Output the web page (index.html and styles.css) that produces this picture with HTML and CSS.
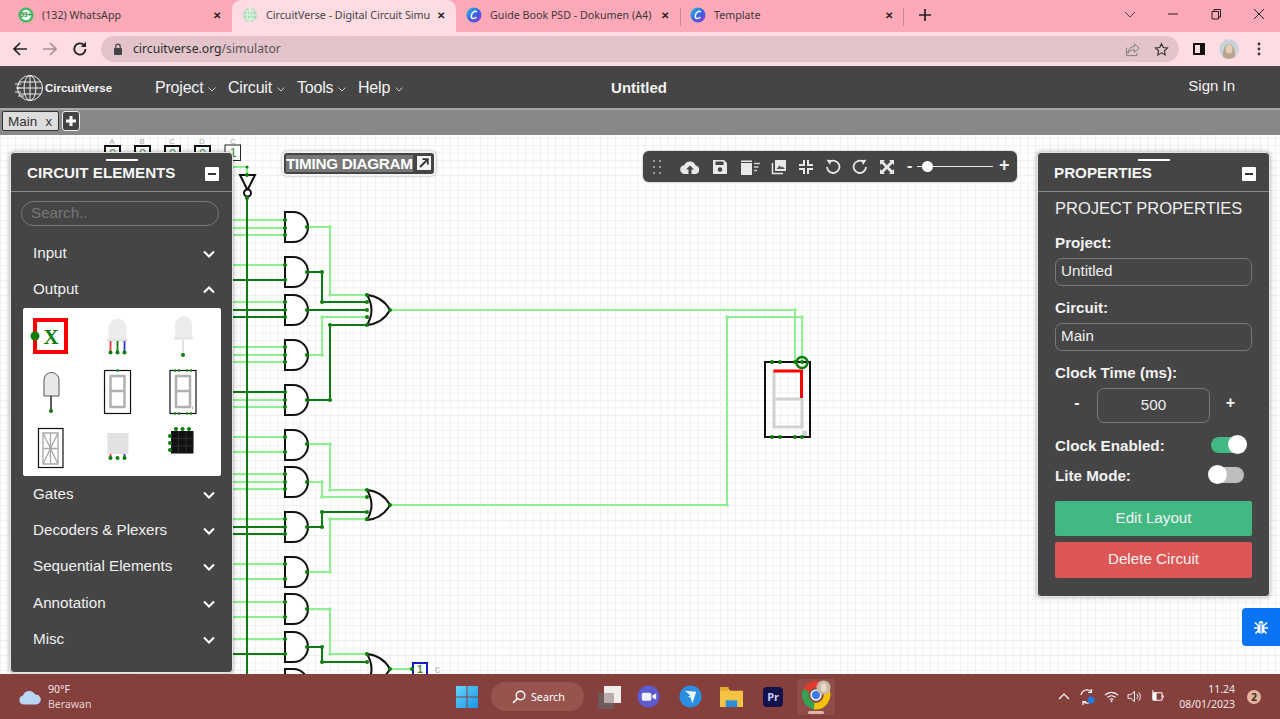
FILE: index.html
```html
<!DOCTYPE html>
<html lang="en">
<head>
<meta charset="utf-8">
<title>CircuitVerse - Digital Circuit Simulator</title>
<link rel="stylesheet" href="styles.css">
</head>
<body>
<div class="screen">

  <div class="tabstrip">
    <div class="tab">
      <svg class="favicon" viewBox="0 0 16 16"><circle cx="8" cy="8" r="7.5" fill="#3dbb5a"/><circle cx="8" cy="8" r="5.2" fill="#f4fff6"/><text x="8" y="10.4" class="fav-num">99+</text></svg>
      <span class="tab-title">(132) WhatsApp</span>
      <span class="tab-x">✕</span>
    </div>
    <div class="tab tab-active">
      <svg class="favicon" viewBox="0 0 16 16"><circle cx="8" cy="8" r="7" fill="#a8dcb4"/><path d="M1 8h14M8 1v14M3 4h10M3 12h10M8 1C4 4 4 12 8 15M8 1c4 3 4 11 0 14" fill="none" stroke="#e8f5ea" stroke-width="1"/></svg>
      <span class="tab-title tab-fade">CircuitVerse - Digital Circuit Simu</span>
      <span class="tab-x">✕</span>
    </div>
    <div class="tab">
      <svg class="favicon" viewBox="0 0 16 16"><defs><linearGradient id="canva" x1="0" y1="0" x2="1" y2="1"><stop offset="0" stop-color="#21c4d8"/><stop offset=".55" stop-color="#3d5ee0"/><stop offset="1" stop-color="#8a3be0"/></linearGradient></defs><circle cx="8" cy="8" r="7.5" fill="url(#canva)"/><path d="M10.6 5.2C9.6 3.4 6.2 4.6 5.4 8.4c-.7 3.4 2.4 4.2 5 1.6" fill="none" stroke="#fff" stroke-width="1.5"/></svg>
      <span class="tab-title">Guide Book PSD - Dokumen (A4)</span>
      <span class="tab-x">✕</span>
    </div>
    <div class="tab tab-sep">
      <svg class="favicon" viewBox="0 0 16 16"><circle cx="8" cy="8" r="7.5" fill="url(#canva)"/><path d="M10.6 5.2C9.6 3.4 6.2 4.6 5.4 8.4c-.7 3.4 2.4 4.2 5 1.6" fill="none" stroke="#fff" stroke-width="1.5"/></svg>
      <span class="tab-title">Template</span>
      <span class="tab-x">✕</span>
    </div>
    <svg class="newtab" viewBox="0 0 12 12"><path d="M6 0v12M0 6h12" stroke="#222" stroke-width="1.7"/></svg>
    <div class="winctl">
      <svg viewBox="0 0 12 12"><path d="M1 4l5 5 5-5" fill="none" stroke="#444" stroke-width="1"/></svg>
      <svg viewBox="0 0 12 12"><path d="M1 6h10" stroke="#222" stroke-width="1"/></svg>
      <svg viewBox="0 0 12 12"><path d="M2 3.5h6.5V11H2zM4 3.5V1.5h6.5V9H8.500" fill="none" stroke="#222" stroke-width="1"/></svg>
      <svg viewBox="0 0 12 12"><path d="M1 1l10 10M11 1L1 11" stroke="#222" stroke-width="1"/></svg>
    </div>
  </div>

  <div class="browserbar">
    <svg class="nav-ico" viewBox="0 0 16 16"><path d="M15 8H2M8 2L2 8l6 6" fill="none" stroke="#222" stroke-width="1.7"/></svg>
    <svg class="nav-ico" viewBox="0 0 16 16"><path d="M1 8h13M8 2l6 6-6 6" fill="none" stroke="#a68f95" stroke-width="1.7"/></svg>
    <svg class="nav-ico" viewBox="0 0 16 16"><path d="M13.500 8A5.600 5.600 0 1 1 11.800 4" fill="none" stroke="#222" stroke-width="1.800"/><path d="M14 0.800V6H8.800z" fill="#222"/></svg>
    <div class="urlbar">
      <svg class="lock" viewBox="0 0 10 12"><rect x="1" y="5" width="8" height="7" rx="1" fill="#444"/><path d="M2.800 5V3.400a2.200 2.200 0 0 1 4.400 0V5" fill="none" stroke="#444" stroke-width="1.200"/></svg>
      <span class="url"><span class="url-host">circuitverse.org</span>/simulator</span>
      <svg class="url-ico" viewBox="0 0 16 16"><path d="M10 2l5 4.500-5 4.500V8.300C6.500 8.300 4.500 9.500 3 12c.3-4 3-7 7-7.300zM1.500 6v8.500h11V12" fill="none" stroke="#777" stroke-width="1"/></svg>
      <svg class="url-ico" viewBox="0 0 16 16"><path d="M8 1.800l1.900 4.100 4.500.5-3.300 3 .9 4.400L8 11.600l-4 2.200.9-4.400-3.300-3 4.500-.5z" fill="none" stroke="#333" stroke-width="1.200"/></svg>
    </div>
    <svg class="side-ico" viewBox="0 0 14 14"><rect x="1" y="1" width="12" height="12" fill="#111"/><rect x="3" y="3" width="5" height="8" fill="#ffdbe2"/></svg>
    <svg class="avatar" viewBox="0 0 20 20"><circle cx="10" cy="10" r="10" fill="#c7d4dc"/><path d="M4 20c-1-7 1-15 6-15s7 8 6 15z" fill="#b9a48f"/><ellipse cx="10" cy="10" rx="3.500" ry="4.500" fill="#e6cdb8"/></svg>
    <svg class="dots" viewBox="0 0 4 14"><circle cx="2" cy="2" r="1.400" fill="#333"/><circle cx="2" cy="7" r="1.400" fill="#333"/><circle cx="2" cy="12" r="1.400" fill="#333"/></svg>
  </div>

  <header class="appnav">
    <div class="appnav-left">
      <div class="logo">
        <svg class="logo-mark" viewBox="0 0 28 28"><g fill="none" stroke="#eee" stroke-width="1"><circle cx="15" cy="14" r="12.500"/><ellipse cx="15" cy="14" rx="6" ry="12.500"/><path d="M15 1.500v25M4 8h22M2.500 14h25M4 20h22"/><path d="M0 10h6M1 14h5M0 18h6M3 22h6"/></g></svg>
        <span class="logo-text">CircuitVerse</span>
      </div>
      <nav class="menu">
        <span class="menu-item menu-project">Project<svg class="menu-chev" viewBox="0 0 8 5"><path d="M.5.500L4 4 7.500.500" fill="none" stroke="#ccc"/></svg></span>
        <span class="menu-item menu-circuit">Circuit<svg class="menu-chev" viewBox="0 0 8 5"><path d="M.5.500L4 4 7.500.500" fill="none" stroke="#ccc"/></svg></span>
        <span class="menu-item menu-tools">Tools<svg class="menu-chev" viewBox="0 0 8 5"><path d="M.5.500L4 4 7.500.500" fill="none" stroke="#ccc"/></svg></span>
        <span class="menu-item">Help<svg class="menu-chev" viewBox="0 0 8 5"><path d="M.5.500L4 4 7.500.500" fill="none" stroke="#ccc"/></svg></span>
      </nav>
    </div>
    <div class="project-name">Untitled</div>
    <div class="signin">Sign In</div>
  </header>

  <div class="circuit-tabs">
    <div class="circuit-tab"><span>Main</span><span>x</span></div>
    <div class="circuit-add"><svg viewBox="0 0 12 12"><path d="M6 1v10M1 6h10" stroke="#fff" stroke-width="3"/></svg></div>
  </div>

  <main class="canvas">
    <svg class="board" viewBox="0 135 1280 539" width="1280" height="539">
      <defs>
        <symbol id="and" viewBox="-2 -2 27 34" width="27" height="34"><path d="M0 0H8C18 0 23 8 23 15C23 22 18 30 8 30H0Z" fill="#fff" stroke="#111" stroke-width="2"/></symbol>
        <symbol id="or" viewBox="-2 -2 27 34" width="27" height="34"><path d="M0 0C10 1 18 6 23 15C18 24 10 29 0 30C6 20 6 10 0 0Z" fill="#fff" stroke="#111" stroke-width="2"/></symbol>
      </defs>

      <g class="labels">
        <text x="112" y="144">A</text><text x="142" y="144">B</text><text x="172" y="144">C</text><text x="202" y="144">D</text><text x="233" y="144">_C_</text>
      </g>
      <g class="inbox">
        <rect x="105" y="146" width="15" height="15"/><rect x="135" y="146" width="15" height="15"/><rect x="165" y="146" width="15" height="15"/><rect x="195" y="146" width="15" height="15"/>
      </g>
      <rect class="inbox-thin" x="225" y="145" width="15.500" height="15.500"/>
      <g class="bitval">
        <text x="112.500" y="158">0</text><text x="142.500" y="158">0</text><text x="172.500" y="158">0</text><text x="202.500" y="158">0</text><text x="233" y="157">1</text>
      </g>

      <path class="wire-low" d="M230 167H247V175
        M230 220H285M230 228H285M230 235H285M230 265H285M230 302H285M230 347H285M230 355H285M230 362H285M230 400H285M230 407H285
        M230 437H285M230 452H285M230 474H285M230 482H285M230 489H285M230 519H285M230 564H285M230 579H285M230 602H285M230 617H285M230 639H285
        M307 227H330V295H367M307 355H322V317H367
        M390 310H795V362M727 505V317H802V362M390 505H727
        M307 444H330V490H367M307 482H322V497H367M307 572H330V519H367M307 609H330V654H367M390 669H412"/>
      <path class="wire-high" d="M247 197V674
        M230 280H285M230 310H367M230 317H285M230 392H285M230 527H285M230 534H285M230 654H285
        M307 272H322V302H367M307 400H330V325H367M307 527H322V512H367M307 647H322V662H367"/>

      <g>
        <use href="#and" x="283" y="210"/><use href="#and" x="283" y="255"/><use href="#and" x="283" y="293"/><use href="#and" x="283" y="338"/><use href="#and" x="283" y="383"/>
        <use href="#and" x="283" y="428"/><use href="#and" x="283" y="465"/><use href="#and" x="283" y="510"/><use href="#and" x="283" y="555"/><use href="#and" x="283" y="592"/><use href="#and" x="283" y="630"/><use href="#and" x="283" y="667"/>
        <use href="#or" x="365" y="293"/><use href="#or" x="365" y="488"/><use href="#or" x="365" y="652"/>
      </g>

      <path class="not-gate" d="M240 175H255L247.500 190Z"/>
      <circle class="not-bubble" cx="247.500" cy="193" r="3.500"/>

      <rect class="out-box" x="413" y="663" width="14" height="14"/>
      <text class="out-val" x="420" y="673">1</text>
      <text class="out-label" x="435" y="673">c</text>

      <g class="seg-off">
        <path d="M774 371V399M774 399V427H802V399M774 399H802"/>
      </g>
      <path class="seg-on" d="M773.500 371H801.500V398"/>
      <rect class="seg-box" x="765" y="362" width="45" height="75"/>
      <rect class="seg-dot" x="802" y="431" width="5" height="5"/>

      <g class="nodes">
        <circle cx="247" cy="167" r="1.500"/><circle cx="247" cy="175" r="2"/><circle cx="247" cy="198" r="2"/>
        <circle cx="285" cy="220" r="2"/><circle cx="285" cy="228" r="2"/><circle cx="285" cy="235" r="2"/><circle cx="307" cy="227" r="2"/>
        <circle cx="285" cy="265" r="2"/><circle cx="285" cy="280" r="2"/><circle cx="307" cy="272" r="2"/>
        <circle cx="285" cy="302" r="2"/><circle cx="285" cy="310" r="2"/><circle cx="285" cy="317" r="2"/><circle cx="307" cy="310" r="2"/>
        <circle cx="285" cy="347" r="2"/><circle cx="285" cy="355" r="2"/><circle cx="285" cy="362" r="2"/><circle cx="307" cy="355" r="2"/>
        <circle cx="285" cy="392" r="2"/><circle cx="285" cy="400" r="2"/><circle cx="285" cy="407" r="2"/><circle cx="307" cy="400" r="2"/>
        <circle cx="285" cy="437" r="2"/><circle cx="285" cy="452" r="2"/><circle cx="307" cy="444" r="2"/>
        <circle cx="285" cy="474" r="2"/><circle cx="285" cy="482" r="2"/><circle cx="285" cy="489" r="2"/><circle cx="307" cy="482" r="2"/>
        <circle cx="285" cy="519" r="2"/><circle cx="285" cy="527" r="2"/><circle cx="285" cy="534" r="2"/><circle cx="307" cy="527" r="2"/>
        <circle cx="285" cy="564" r="2"/><circle cx="285" cy="579" r="2"/><circle cx="307" cy="572" r="2"/>
        <circle cx="285" cy="602" r="2"/><circle cx="285" cy="617" r="2"/><circle cx="307" cy="609" r="2"/>
        <circle cx="285" cy="639" r="2"/><circle cx="285" cy="654" r="2"/><circle cx="307" cy="647" r="2"/>
        <circle cx="322" cy="272" r="2"/><circle cx="322" cy="302" r="2"/><circle cx="330" cy="400" r="2"/><circle cx="330" cy="325" r="2"/><circle cx="322" cy="527" r="2"/><circle cx="322" cy="512" r="2"/><circle cx="322" cy="647" r="2"/><circle cx="322" cy="662" r="2"/>
        <circle cx="367" cy="295" r="2"/><circle cx="367" cy="302" r="2"/><circle cx="367" cy="310" r="2"/><circle cx="367" cy="317" r="2"/><circle cx="367" cy="325" r="2"/><circle cx="390" cy="310" r="2"/>
        <circle cx="367" cy="490" r="2"/><circle cx="367" cy="497" r="2"/><circle cx="367" cy="512" r="2"/><circle cx="367" cy="519" r="2"/><circle cx="390" cy="505" r="2"/>
        <circle cx="367" cy="654" r="2"/><circle cx="367" cy="662" r="2"/><circle cx="390" cy="669" r="2"/><circle cx="412" cy="669" r="2"/>
        <circle cx="772" cy="362" r="2"/><circle cx="780" cy="362" r="2"/><circle cx="795" cy="362" r="2"/><circle cx="802" cy="362" r="2"/>
        <circle cx="772" cy="437" r="2"/><circle cx="780" cy="437" r="2"/><circle cx="795" cy="437" r="2"/><circle cx="802" cy="437" r="2"/>
      </g>
      <g class="node-light">
        <circle cx="330" cy="227" r="1.800"/><circle cx="330" cy="295" r="1.800"/><circle cx="322" cy="355" r="1.800"/><circle cx="322" cy="317" r="1.800"/>
        <circle cx="330" cy="444" r="1.800"/><circle cx="330" cy="490" r="1.800"/><circle cx="322" cy="482" r="1.800"/><circle cx="322" cy="497" r="1.800"/>
        <circle cx="330" cy="572" r="1.800"/><circle cx="330" cy="519" r="1.800"/><circle cx="330" cy="609" r="1.800"/><circle cx="330" cy="654" r="1.800"/>
        <circle cx="795" cy="310" r="1.800"/><circle cx="727" cy="317" r="1.800"/><circle cx="802" cy="317" r="1.800"/><circle cx="727" cy="505" r="1.800"/>
      </g>
      <circle class="node-ring" cx="802" cy="362.500" r="5.500"/>
    </svg>

    <div class="timing">
      <span class="timing-text">TIMING DIAGRAM</span>
      <svg class="timing-ico" viewBox="0 0 14 14"><rect width="14" height="14" fill="#f4f4f4"/><path d="M3 11l7-7M5.500 3.200h5.300v5.300" fill="none" stroke="#333" stroke-width="1.800"/></svg>
    </div>

    <div class="quick">
      <svg class="q-grip" viewBox="0 0 10 16"><g fill="#999"><rect x="1" y="1" width="2" height="2"/><rect x="7" y="1" width="2" height="2"/><rect x="1" y="7" width="2" height="2"/><rect x="7" y="7" width="2" height="2"/><rect x="1" y="13" width="2" height="2"/><rect x="7" y="13" width="2" height="2"/></g></svg>
      <svg class="q-cloud" viewBox="0 0 20 14"><path d="M5 14a4.500 4.500 0 0 1-.6-9A6 6 0 0 1 15.500 5.500 4.300 4.300 0 0 1 15.500 14H11.500V9.500H14L10 5.500 6 9.500H8.500V14z" fill="#e8e8e8"/></svg>
      <svg class="q-ico q-save" viewBox="0 0 16 16"><path d="M1 1h11l3 3v11H1z" fill="#e8e8e8"/><rect x="3.500" y="2.500" width="8" height="3.500" fill="#454545"/><circle cx="8" cy="10.500" r="2.200" fill="#454545"/></svg>
      <svg class="q-wide q-trash" viewBox="0 0 20 16"><path d="M1 4h11v12H1zM1 1.500h11V3H1z" fill="#e8e8e8"/><path d="M14 4.500h6M14 8h4.500M14 11.500h3" stroke="#cfcfcf" stroke-width="1.600"/></svg>
      <svg class="q-ico" viewBox="0 0 16 16"><path d="M4 1h11v11H4z" fill="#e8e8e8"/><path d="M5.500 10l3-3.500 2 2 1-1 2.500 2.500z" fill="#555"/><path d="M1.500 4v10.500H12" fill="none" stroke="#e8e8e8" stroke-width="1.500"/></svg>
      <svg class="q-ico" viewBox="0 0 16 16"><path d="M6 1v5H1M10 1v5h5M6 15v-5H1M10 15v-5h5" fill="none" stroke="#e8e8e8" stroke-width="2"/></svg>
      <svg class="q-ico" viewBox="0 0 16 16"><path d="M4.500 2.800A6.200 6.200 0 1 1 2 8" fill="none" stroke="#e8e8e8" stroke-width="1.800"/><path d="M1.500 0.800L6.500 1 5 6z" fill="#e8e8e8"/></svg>
      <svg class="q-ico" viewBox="0 0 16 16"><path d="M11.500 2.800A6.200 6.200 0 1 0 14 8" fill="none" stroke="#e8e8e8" stroke-width="1.800"/><path d="M14.500 0.800L9.500 1 11 6z" fill="#e8e8e8"/></svg>
      <svg class="q-ico" viewBox="0 0 16 16"><path d="M1 1h5L4.500 2.500 8 6 11.500 2.500 10 1h5v5l-1.500-1.500L10 8l3.500 3.500L15 10v5h-5l1.500-1.500L8 10l-3.500 3.500L6 15H1v-5l1.500 1.500L6 8 2.500 4.500 1 6z" fill="#e8e8e8"/></svg>
      <span class="q-minus">-</span>
      <div class="q-slider"><span class="q-knob"></span></div>
      <span class="q-plus">+</span>
    </div>

    <aside class="panel panel-left">
      <span class="grip"></span>
      <div class="panel-head">
        <span class="panel-title">CIRCUIT ELEMENTS</span>
        <span class="minimize"></span>
      </div>
      <div class="search">Search..</div>
      <div class="acc-row"><span>Input</span><svg class="chev" viewBox="0 0 12 8"><path d="M1 1.500l5 5 5-5" fill="none" stroke="#fff" stroke-width="2"/></svg></div>
      <div class="acc-row"><span>Output</span><svg class="chev" viewBox="0 0 12 8"><path d="M1 6.500l5-5 5 5" fill="none" stroke="#fff" stroke-width="2"/></svg></div>
      <div class="elements">
        <svg class="el" viewBox="23 309 54 56"><rect x="35" y="320" width="31" height="32" fill="#fff" stroke="#f00" stroke-width="4"/><text x="51" y="344" class="el-x">X</text><circle cx="35" cy="336" r="4.500" fill="#0a7d0a"/></svg>
        <svg class="el" viewBox="89.500 309 54 56"><path d="M108 340V328a9 9.500 0 0 1 18 0v12z" fill="#ececec"/><rect x="107" y="339" width="20" height="2.500" fill="#e0e0e0"/><path d="M110 341v11" stroke="#e33" stroke-width="1.800"/><path d="M117 341v11" stroke="#0a7d0a" stroke-width="1.800"/><path d="M124 341v11" stroke="#33c" stroke-width="1.800"/><circle cx="110" cy="352.500" r="2" fill="#0a7d0a"/><circle cx="117" cy="352.500" r="2" fill="#0a7d0a"/><circle cx="124" cy="352.500" r="2" fill="#0a7d0a"/></svg>
        <svg class="el" viewBox="156 309 54 56"><path d="M175 338V325a8.500 9 0 0 1 17 0v13z" fill="#ececec"/><rect x="174" y="337" width="19" height="2.500" fill="#e4e4e4"/><path d="M183 340v15" stroke="#e2e2e2" stroke-width="2"/><circle cx="183" cy="355" r="2" fill="#0a7d0a"/></svg>
        <svg class="el" viewBox="23 365 54 56"><path d="M44 396V380a7.500 7.500 0 0 1 15 0v16z" fill="#e8e8e8" stroke="#555" stroke-width="1"/><path d="M51 396v15" stroke="#333" stroke-width="1.600"/><circle cx="51" cy="411" r="2" fill="#0a7d0a"/></svg>
        <svg class="el" viewBox="89.500 365 54 56"><rect x="104" y="370.500" width="26" height="43" fill="#fff" stroke="#111" stroke-width="1.200"/><path class="el-seg" d="M110 376h14v15h-14zM110 391v16h14v-16"/><circle cx="117" cy="370.500" r="1.200" fill="#0a7d0a"/></svg>
        <svg class="el" viewBox="156 365 54 56"><rect x="170" y="370.500" width="26" height="43" fill="#fff" stroke="#111" stroke-width="1.200"/><path class="el-seg" d="M176 376h14v15h-14zM176 391v16h14v-16M192 408h1"/><g fill="#0a7d0a"><circle cx="175" cy="370.500" r="1.200"/><circle cx="179" cy="370.500" r="1.200"/><circle cx="187" cy="370.500" r="1.200"/><circle cx="191" cy="370.500" r="1.200"/><circle cx="175" cy="413.500" r="1.200"/><circle cx="179" cy="413.500" r="1.200"/><circle cx="187" cy="413.500" r="1.200"/><circle cx="191" cy="413.500" r="1.200"/></g></svg>
        <svg class="el" viewBox="23 421 54 56"><rect x="38.500" y="428.500" width="24.500" height="39" fill="#fff" stroke="#111" stroke-width="1.200"/><path d="M43 433h15v31H43zM43 448.500h15M50.500 433v31M43 433l15 31M58 433L43 464" fill="none" stroke="#a8a8a8" stroke-width="1.300"/></svg>
        <svg class="el" viewBox="89.500 421 54 56"><rect x="107" y="433" width="21" height="21" fill="#e2e2e2"/><path d="M110 454v4" stroke="#e33" stroke-width="1.800"/><path d="M124 454v4" stroke="#33c" stroke-width="1.800"/><g fill="#0a7d0a"><circle cx="110" cy="458" r="2"/><circle cx="117" cy="458" r="2"/><circle cx="124" cy="458" r="2"/></g></svg>
        <svg class="el" viewBox="156 421 54 56"><rect x="171" y="431" width="22.500" height="22.500" fill="#111"/><path d="M178.500 431v22.500M186 431v22.500M171 438.500h22.500M171 446h22.500" stroke="#3a3a3a" stroke-width=".7"/><g fill="#0a7d0a"><circle cx="176" cy="429" r="2"/><circle cx="182.500" cy="429" r="2"/><circle cx="189" cy="429" r="2"/><circle cx="170" cy="436" r="2"/><circle cx="170" cy="443" r="2"/><circle cx="170" cy="450" r="2"/></g></svg>
      </div>
      <div class="acc-row"><span>Gates</span><svg class="chev" viewBox="0 0 12 8"><path d="M1 1.500l5 5 5-5" fill="none" stroke="#fff" stroke-width="2"/></svg></div>
      <div class="acc-row"><span>Decoders &amp; Plexers</span><svg class="chev" viewBox="0 0 12 8"><path d="M1 1.500l5 5 5-5" fill="none" stroke="#fff" stroke-width="2"/></svg></div>
      <div class="acc-row"><span>Sequential Elements</span><svg class="chev" viewBox="0 0 12 8"><path d="M1 1.500l5 5 5-5" fill="none" stroke="#fff" stroke-width="2"/></svg></div>
      <div class="acc-row"><span>Annotation</span><svg class="chev" viewBox="0 0 12 8"><path d="M1 1.500l5 5 5-5" fill="none" stroke="#fff" stroke-width="2"/></svg></div>
      <div class="acc-row"><span>Misc</span><svg class="chev" viewBox="0 0 12 8"><path d="M1 1.500l5 5 5-5" fill="none" stroke="#fff" stroke-width="2"/></svg></div>
    </aside>

    <aside class="panel panel-right">
      <span class="grip"></span>
      <div class="panel-head">
        <span class="panel-title">PROPERTIES</span>
        <span class="minimize"></span>
      </div>
      <div class="prop-body">
        <div class="prop-heading">PROJECT PROPERTIES</div>
        <div class="prop-label prop-first">Project:</div>
        <div class="field">Untitled</div>
        <div class="prop-label">Circuit:</div>
        <div class="field">Main</div>
        <div class="prop-label">Clock Time (ms):</div>
        <div class="stepper">
          <span class="step-minus">-</span>
          <div class="step-value">500</div>
          <span class="step-plus">+</span>
        </div>
        <div class="toggle-row toggle-clock">
          <span>Clock Enabled:</span>
          <span class="toggle toggle-on"><i></i></span>
        </div>
        <div class="toggle-row toggle-lite">
          <span>Lite Mode:</span>
          <span class="toggle toggle-off"><i></i></span>
        </div>
        <div class="btn btn-green">Edit Layout</div>
        <div class="btn btn-red">Delete Circuit</div>
      </div>
    </aside>

    <div class="bug">
      <svg viewBox="0 0 16 16"><path d="M4.500 5.500h7V11a3.500 3.500 0 0 1-7 0zM5.500 4.500a2.500 2.500 0 0 1 5 0z" fill="#fff"/><path d="M4.500 6L2 3.500M11.500 6L14 3.500M4.500 9H1M11.500 9H15M4.800 12L2.500 14.500M11.200 12l2.300 2.500" stroke="#fff" stroke-width="1.600"/><path d="M8 6v8" stroke="#0a74f5" stroke-width="1"/></svg>
    </div>
  </main>

  <footer class="taskbar">
    <div class="weather">
      <svg class="weather-ico" viewBox="0 0 24 16"><path d="M6 15.500a4.500 4.500 0 0 1-1-8.900A6.500 6.500 0 0 1 17 5.500a5 5 0 0 1 1.500 10z" fill="#b9d6f5"/></svg>
      <div class="weather-text"><span class="w-temp">90°F</span><span class="w-cond">Berawan</span></div>
    </div>
    <div class="apps">
      <svg class="start" viewBox="0 0 22 22"><defs><linearGradient id="win" x1="0" y1="0" x2="1" y2="1"><stop offset="0" stop-color="#63d6fb"/><stop offset="1" stop-color="#1a93ea"/></linearGradient></defs><path d="M0 0h10.500v10.500H0zM11.500 0H22v10.500H11.500zM0 11.500h10.500V22H0zM11.500 11.500H22V22H11.500z" fill="url(#win)"/></svg>
      <div class="search-pill">
        <svg viewBox="0 0 14 14"><circle cx="8.500" cy="5.500" r="4.300" fill="none" stroke="#fff" stroke-width="1.400"/><path d="M5.500 8.500L1 13" stroke="#fff" stroke-width="1.600"/></svg>
        <span>Search</span>
      </div>
      <svg class="taskview" viewBox="0 0 24 24"><rect x="1" y="8" width="16" height="16" fill="#6e5a58"/><rect x="7" y="1" width="17" height="17" fill="#f2eeee"/><rect x="7" y="8" width="10" height="10" fill="#b9adac"/></svg>
      <svg class="app app-meet" viewBox="0 0 24 24"><circle cx="12" cy="12" r="11.500" fill="#5d5bd0"/><rect x="5" y="8" width="10" height="8.500" rx="2" fill="#f1f0ff"/><path d="M16 11l4-2.500v7L16 13z" fill="#f1f0ff"/></svg>
      <svg class="app app-bird" viewBox="0 0 24 24"><circle cx="12" cy="12" r="11.500" fill="#2a8fe0"/><path d="M6 6l12 1-4 12-2-6-3-1 3-1z" fill="#e9f5ff"/></svg>
      <svg class="app app-folder" viewBox="0 0 24 24"><path d="M0 4h9l2 2h13v17H0z" fill="#f6c243"/><rect x="0" y="2" width="9" height="4" fill="#e2a92a"/><rect x="6" y="16" width="12" height="7" fill="#2a8fd8"/></svg>
      <div class="pr-ico">Pr</div>
      <div class="chrome-slot">
        <svg class="chrome" viewBox="0 0 32 32"><g fill="none" stroke-width="7"><path d="M5.500 12A12 12 0 0 1 26 9" stroke="#e33b30"/><path d="M5.500 11A12.500 12.500 0 0 0 15 28" stroke="#34a34f"/><path d="M27 11A12.500 12.500 0 0 1 14 28" stroke="#f4c20d"/></g><circle cx="16" cy="16" r="6" fill="#fff"/><circle cx="16" cy="16" r="4.500" fill="#3b7de8"/><circle cx="24" cy="8" r="7.500" fill="#cbb9a8"/><ellipse cx="24" cy="8" rx="3" ry="4.500" fill="#eadace"/></svg>
        <span class="chrome-bar"></span>
      </div>
    </div>
    <div class="tray">
      <svg class="tray-ico" viewBox="0 0 12 12"><path d="M1 8.500L6 3.500l5 5" fill="none" stroke="#fff" stroke-width="1.200"/></svg>
      <svg class="tray-sync" viewBox="0 0 18 18"><path d="M3 7a6 6 0 0 1 10-3.500M15 10a6 6 0 0 1-10 3.500" fill="none" stroke="#fff" stroke-width="1.300"/><path d="M13.500 1v3.500H10M5 17v-3.500h3" fill="none" stroke="#fff" stroke-width="1.200"/><circle cx="13" cy="12" r="3.500" fill="#1e7fe0"/></svg>
      <svg class="tray-ico" viewBox="0 0 16 12"><path d="M1 4.500a10 10 0 0 1 14 0M3.500 7a6.500 6.500 0 0 1 9 0M6 9.300a3 3 0 0 1 4 0" fill="none" stroke="#fff" stroke-width="1.200"/><circle cx="8" cy="11" r="1" fill="#fff"/></svg>
      <svg class="tray-ico" viewBox="0 0 16 14"><path d="M1 5h3l4-3.500v11L4 9H1z" fill="none" stroke="#fff"/><path d="M10.500 4.500a3.500 3.500 0 0 1 0 5M12.500 2.500a6.500 6.500 0 0 1 0 9" fill="none" stroke="#fff"/></svg>
      <svg class="tray-ico" viewBox="0 0 16 14"><rect x="3" y="3" width="10" height="8" rx="1" fill="none" stroke="#fff" stroke-width="1.200"/><rect x="3" y="3" width="4" height="8" fill="#fff"/><path d="M14 6v2" stroke="#fff" stroke-width="1.500"/><path d="M3 0v3" stroke="#fff"/></svg>
      <div class="clock"><span>11.24</span><span>08/01/2023</span></div>
      <span class="notif">2</span>
    </div>
  </footer>
</div>
</body>
</html>
```

FILE: styles.css
```css
* { box-sizing: border-box; }
html, body { margin: 0; padding: 0; }
body { font-family: "Liberation Sans", Arial, sans-serif; background: #fff; overflow: hidden; }
.screen { width: 1280px; height: 719px; display: flex; flex-direction: column; overflow: hidden; }

/* browser tabs */
.tabstrip { height: 32px; background: #fea9b8; display: flex; align-items: stretch; padding-left: 8px; flex: none; }
.tab { width: 224px; display: flex; align-items: center; padding: 0 8px 2px 10px; font-family: "Noto Sans", sans-serif; font-size: 10.7px; color: #3a3a3a; position: relative; }
.tab-active { background: #ffdbe2; border-radius: 9px 9px 0 0; }
.tab-sep::before, .tab-sep::after { content: ""; position: absolute; top: 8px; bottom: 6px; width: 1px; background: #c98896; }
.tab-sep::before { left: 0; }
.tab-sep::after { right: 0; }
.favicon { width: 16px; height: 16px; flex: none; margin-right: 8px; }
.fav-num { font: bold 6.5px "Liberation Sans", sans-serif; text-anchor: middle; fill: #2a8a44; }
.tab-title { flex: 1; white-space: nowrap; overflow: hidden; }
.tab-fade { color: #444; }
.tab-x { width: 14px; flex: none; text-align: center; font-size: 10px; font-weight: bold; color: #222; }
.newtab { width: 12px; height: 12px; margin: 9px 0 0 15px; flex: none; }
.winctl { margin-left: auto; display: flex; align-items: flex-start; padding: 8px 15px 0 0; gap: 31px; }
.winctl svg { width: 12px; height: 12px; }

/* address bar */
.browserbar { height: 34px; background: #ffdbe2; display: flex; align-items: center; flex: none; padding-left: 12px; }
.nav-ico { width: 16px; height: 16px; margin-right: 14px; }
.urlbar { width: 1078px; height: 26px; margin-left: -1px; background: #e2c4ca; border-radius: 13px; display: flex; align-items: center; padding-left: 12px; }
.lock { width: 10px; height: 12px; margin-right: 10px; flex: none; }
.url { flex: 1; font-family: "Noto Sans", sans-serif; font-size: 12.2px; color: #5f5458; padding-bottom: 1px; }
.url-host { color: #2c2c2c; }
.url-ico { width: 15px; height: 15px; margin-right: 14px; flex: none; }
.urlbar .url-ico:last-child { margin-right: 10px; }
.side-ico { width: 14px; height: 14px; margin-left: 13px; flex: none; }
.avatar { width: 20px; height: 20px; margin-left: 13px; flex: none; border-radius: 50%; }
.dots { width: 4px; height: 14px; margin-left: 18px; flex: none; }

/* app header */
.appnav { height: 44px; background: #454545; border-bottom: 2px solid #a9a9a9; display: grid; grid-template-columns: 1fr auto 1fr; align-items: center; color: #f2f2f2; flex: none; padding-top: 1px; }
.appnav-left { display: flex; align-items: center; padding-left: 15px; }
.logo { display: flex; align-items: center; width: 140px; }
.logo-mark { width: 28px; height: 28px; flex: none; }
.logo-text { font-size: 11.5px; font-weight: bold; margin-left: 2px; color: #f4f4f4; }
.menu { display: flex; font-size: 16px; }
.menu-item { display: flex; align-items: center; letter-spacing: -.2px; }
.menu-chev { width: 8px; height: 5px; margin: 3px 0 0 5px; }
.menu-project { width: 73px; }
.menu-circuit { width: 69px; }
.menu-tools { width: 61px; }
.project-name { font-size: 15px; font-weight: bold; transform: translateX(-1px); }
.signin { justify-self: end; margin-right: 45px; font-size: 15px; margin-top: -4px; }

/* circuit tabs */
.circuit-tabs { height: 25px; background: #888; display: flex; align-items: center; padding: 0 0 3px 2px; flex: none; }
.circuit-tab { width: 57px; height: 20px; background: #ddd; border: 1px solid #333; border-radius: 2px; display: flex; justify-content: space-between; align-items: center; padding: 0 6px 0 5px; font-size: 13.5px; color: #333; }
.circuit-tab span:last-child { font-size: 13px; }
.circuit-add { width: 18px; height: 20px; margin-left: 3px; background: #444; border: 1px solid #eee; border-radius: 3px; display: flex; align-items: center; justify-content: center; }
.circuit-add svg { width: 12px; height: 12px; }

/* canvas */
.canvas { flex: 1; position: relative; overflow: hidden; background-color: #fff; background-image: linear-gradient(#f0f0f0 1px, transparent 1px), linear-gradient(90deg, #f0f0f0 1px, transparent 1px); background-size: 7.5px 7.5px; background-position: 0 2.5px; }
.board { position: absolute; left: 0; top: 0; }
.wire-low { fill: none; stroke: #90ee90; stroke-width: 2; }
.wire-high { fill: none; stroke: #0d7a16; stroke-width: 2; }
.nodes circle { fill: #0a7d0a; }
.node-light circle { fill: #90ee90; }
.node-ring { fill: none; stroke: #0a7d0a; stroke-width: 2.5; }
.labels text { font-size: 8px; fill: #aaa; text-anchor: middle; }
.inbox rect { fill: #fff; stroke: #111; stroke-width: 2; }
.inbox-thin { fill: #fff; stroke: #222; stroke-width: 1; }
.bitval text { font-size: 13px; fill: #4c9a4c; text-anchor: middle; }
.not-gate { fill: #fff; stroke: #111; stroke-width: 2; }
.not-bubble { fill: #fff; stroke: #111; stroke-width: 2; }
.out-box { fill: #fff; stroke: #1a1ac8; stroke-width: 2; }
.out-val { font-size: 10px; font-weight: bold; fill: #3a8f3a; text-anchor: middle; }
.out-label { font-size: 10px; fill: #aaa; }
.seg-off path { fill: none; stroke: #d2d2d2; stroke-width: 3; }
.seg-on { fill: none; stroke: #f00; stroke-width: 3; }
.seg-box { fill: none; stroke: #111; stroke-width: 2; }
.seg-dot { fill: #d2d2d2; }

/* timing */
.timing { position: absolute; left: 282px; top: 16px; width: 154px; height: 25px; background: #454545; border: 2px solid #f2f2f2; border-radius: 5px; box-shadow: 0 0 3px rgba(0,0,0,.35); display: flex; align-items: center; padding: 0 0 1px 2px; }
.timing-text { background: #777; color: #fff; font-size: 15.3px; font-weight: bold; line-height: 17px; letter-spacing: -.3px; white-space: nowrap; }
.timing-ico { width: 14px; height: 14px; margin-left: 4px; flex: none; }

/* quick toolbar */
.quick { position: absolute; left: 643px; top: 16px; width: 374px; height: 31px; background: #454545; border-radius: 6px; box-shadow: 0 0 2px rgba(0,0,0,.4); display: flex; align-items: center; gap: 11px; padding-left: 9px; color: #eee; }
.q-grip { width: 10px; height: 16px; flex: none; }
.q-cloud { width: 20px; height: 14px; margin-left: 7px; flex: none; }
.q-ico { width: 16px; height: 16px; flex: none; }
.q-wide { width: 20px; height: 16px; flex: none; }
.q-save, .q-trash { margin-left: 1px; }
.q-minus { font-size: 16px; font-weight: bold; margin: -2px -7px 0 1px; width: 6px; }
.q-slider { width: 76px; height: 1px; background: #e8e8e8; position: relative; flex: none; }
.q-knob { position: absolute; left: 5px; top: -5px; width: 11px; height: 11px; border-radius: 50%; background: #fff; }
.q-plus { font-size: 18px; font-weight: bold; margin-left: -5px; margin-top: -3px; }

/* panels */
.panel { position: absolute; top: 17px; background: #454545; border: 1px solid #e4e4e4; border-radius: 4px; box-shadow: 0 0 5px rgba(0,0,0,.35); color: #f2f2f2; }
.panel-left { left: 10px; width: 223px; height: 521px; }
.panel-right { left: 1037px; width: 233px; height: 445px; }
.grip { position: absolute; left: 95px; top: 6px; width: 32px; height: 2px; background: #fff; }
.panel-right .grip { left: 100px; }
.panel-head { height: 39px; border-bottom: 1px solid #888; display: flex; align-items: center; justify-content: space-between; padding: 3px 13px 0 16px; }
.panel-title { font-size: 15.2px; font-weight: bold; color: #f6f6f6; margin-top: -2px; }
.minimize { width: 14px; height: 14px; background: #fff; border-radius: 1px; position: relative; flex: none; }
.minimize::after { content: ""; position: absolute; left: 3px; right: 3px; top: 6px; height: 2px; background: #333; }
.search { margin: 9px 13px 9px 10px; height: 25px; border: 1px solid #777; border-radius: 13px; padding: 0 9px; font-size: 15.2px; line-height: 22px; color: #777; }
.acc-row { height: 36.2px; display: flex; align-items: center; justify-content: space-between; padding: 0 17px 2px 22px; font-size: 15.2px; color: #f0f0f0; }
.chev { width: 12px; height: 8px; flex: none; margin-top: 3px; }
.elements { margin: 1px 11px 0 12px; height: 168px; background: #fff; border-radius: 2px; padding-top: 1px; display: grid; grid-template-columns: repeat(3, 54px); grid-auto-rows: 56px; column-gap: 12.5px; }
.el { width: 54px; height: 56px; display: block; }
.el-x { font: bold 21px "Liberation Serif", serif; fill: #0a7d0a; text-anchor: middle; }
.el-seg { fill: none; stroke: #b0b0b0; stroke-width: 2.5; stroke-linejoin: round; }

.prop-body { padding: 0 17px; }
.prop-heading { margin-top: 4px; height: 24px; line-height: 24px; font-size: 16.5px; color: #eee; white-space: nowrap; }
.prop-label { height: 22px; line-height: 22px; margin: 11px 0 4px; font-size: 15.2px; font-weight: bold; }
.prop-first { margin-top: 12px; }
.field { height: 28px; width: 197px; border: 1px solid #777; border-radius: 7px; padding-left: 5px; font-size: 15.2px; line-height: 24px; color: #eee; }
.stepper { height: 35px; display: flex; align-items: center; }
.step-minus { width: 42px; text-align: center; font-size: 16px; font-weight: bold; margin-top: -5px; padding-left: 2px; }
.step-value { width: 113px; height: 35px; border: 1px solid #777; border-radius: 7px; text-align: center; line-height: 31px; font-size: 15.2px; color: #eee; }
.step-plus { width: 41px; text-align: center; font-size: 16px; font-weight: bold; margin-top: -6px; }
.toggle-row { height: 22px; display: flex; align-items: center; justify-content: space-between; font-size: 15.2px; font-weight: bold; }
.toggle-clock { margin-top: 11px; }
.toggle-lite { margin-top: 8px; }
.toggle { width: 33px; height: 16px; border-radius: 8px; position: relative; display: block; }
.toggle i { position: absolute; top: -2px; width: 19px; height: 19px; border-radius: 50%; background: #fff; }
.toggle-on { background: #42b983; margin-right: 8px; }
.toggle-on i { right: -3px; }
.toggle-off { background: #bdbdbd; width: 34px; margin-right: 8px; }
.toggle-off i { left: -2px; }
.btn { width: 197px; display: flex; align-items: center; justify-content: center; font-size: 15.2px; color: #f2f2f2; border-radius: 2px; padding-bottom: 2px; }
.btn-green { height: 35px; margin-top: 15px; background: #42b983; }
.btn-red { height: 36px; margin-top: 6px; background: #dc5656; padding-bottom: 3px; }

.bug { position: absolute; left: 1242px; top: 473px; width: 38px; height: 38px; background: #0a74f5; border-radius: 4px 0 0 4px; display: flex; align-items: center; justify-content: center; }
.bug svg { width: 16px; height: 16px; }

/* taskbar */
.taskbar { height: 45px; background: #853f3d; flex: none; display: grid; grid-template-columns: 456px 1fr auto; align-items: center; color: #f3e8e6; font-family: "Noto Sans", sans-serif; }
.weather { display: flex; align-items: center; padding-left: 18px; }
.weather-ico { width: 24px; height: 16px; margin-right: 6px; flex: none; }
.weather-text { display: flex; flex-direction: column; font-size: 10.5px; line-height: 15px; }
.w-cond { color: #e3d2d0; }
.apps { display: flex; align-items: center; }
.start { width: 22px; height: 22px; flex: none; }
.search-pill { width: 93px; height: 29px; margin-left: 13px; background: #98534f; border-radius: 15px; display: flex; align-items: center; padding-left: 21px; font-size: 10.7px; color: #fff; }
.search-pill svg { width: 14px; height: 14px; margin-right: 5px; }
.taskview { width: 24px; height: 24px; margin-left: 13px; flex: none; }
.app { width: 23px; height: 23px; flex: none; }
.app-meet { margin-left: 16px; }
.app-bird { margin-left: 19px; }
.app-folder { margin-left: 18px; }
.pr-ico { width: 20px; height: 20px; margin-left: 20px; background: #14124a; color: #cfc8ff; border-radius: 4px; font-size: 11px; font-weight: bold; text-align: center; line-height: 20px; flex: none; }
.chrome-slot { width: 38px; height: 36px; margin-left: 14px; background: #8f4c49; border-radius: 3px; position: relative; flex: none; }
.chrome { position: absolute; left: 4px; top: 1px; width: 30px; height: 30px; }
.chrome-bar { position: absolute; left: 11px; top: 32px; width: 16px; height: 3px; border-radius: 2px; background: #e3b5a8; }
.tray { display: flex; align-items: center; padding-right: 19px; }
.tray-ico { width: 15px; height: 13px; margin-left: 8px; flex: none; }
.tray-sync { width: 18px; height: 18px; margin-left: 6px; flex: none; }
.tray .tray-ico:first-child { width: 12px; margin-right: 2px; }
.clock { display: flex; flex-direction: column; align-items: flex-end; font-size: 10.5px; line-height: 15px; margin-left: 14px; }
.notif { width: 14px; height: 14px; margin-left: 12px; background: #e3b5a0; color: #4a2a24; border-radius: 50%; font-size: 10px; font-weight: bold; text-align: center; line-height: 14px; flex: none; }
```
